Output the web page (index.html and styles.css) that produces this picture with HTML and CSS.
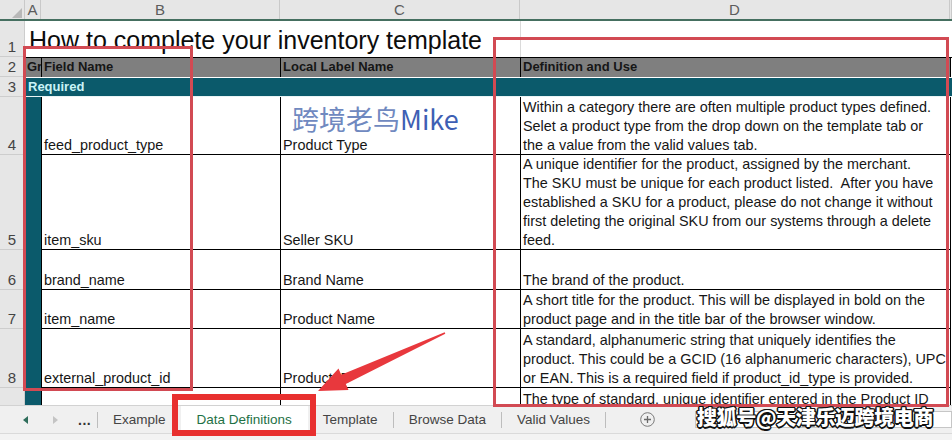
FILE: index.html
```html
<!DOCTYPE html>
<html lang="zh-CN">
<head>
  <meta charset="UTF-8">
  <meta name="viewport" content="width=device-width, initial-scale=1.0">
  <title>Data Definitions</title>
  <link rel="stylesheet" href="styles.css">
</head>
<body>
<div class="window">
  <div class="sheet">
    <div class="row colhead">
      <div class="corner"><svg width="25" height="19" viewBox="0 0 25 19"><polygon points="22,8 22,18 12,18" fill="#b8b8b8"/></svg></div>
      <div>A</div>
      <div>B</div>
      <div>C</div>
      <div>D</div>
      <div></div>
    </div>

    <div class="row r1">
      <div class="rh">1</div>
      <div class="title">How to complete your inventory template</div>
      <div class="grid-d"></div>
      <div></div>
    </div>

    <div class="row r2">
      <div class="rh">2</div>
      <div class="hd hd-a">Gr</div>
      <div class="hd">Field Name</div>
      <div class="hd">Local Label Name</div>
      <div class="hd">Definition and Use</div>
      <div class="hd-end"></div>
    </div>

    <div class="row r3">
      <div class="rh">3</div>
      <div class="req">Required</div>
    </div>

    <div class="row h4">
      <div class="rh">4</div>
      <div class="a"></div>
      <div class="c"><span>feed_product_type</span></div>
      <div class="c"><span>Product Type</span></div>
      <div class="c"><span>Within a category there are often multiple product types defined.<br>Selet a product type from the drop down on the template tab or<br>the a value from the valid values tab.</span></div>
      <div class="end"></div>
    </div>

    <div class="row h5">
      <div class="rh">5</div>
      <div class="a"></div>
      <div class="c"><span>item_sku</span></div>
      <div class="c"><span>Seller SKU</span></div>
      <div class="c"><span>A unique identifier for the product, assigned by the merchant.<br>The SKU must be unique for each product listed.&nbsp; After you have<br>established a SKU for a product, please do not change it without<br>first deleting the original SKU from our systems through a delete<br>feed.</span></div>
      <div class="end"></div>
    </div>

    <div class="row h6">
      <div class="rh">6</div>
      <div class="a"></div>
      <div class="c"><span>brand_name</span></div>
      <div class="c"><span>Brand Name</span></div>
      <div class="c"><span>The brand of the product.</span></div>
      <div class="end"></div>
    </div>

    <div class="row h7">
      <div class="rh">7</div>
      <div class="a"></div>
      <div class="c"><span>item_name</span></div>
      <div class="c"><span>Product Name</span></div>
      <div class="c"><span>A short title for the product. This will be displayed in bold on the<br>product page and in the title bar of the browser window.</span></div>
      <div class="end"></div>
    </div>

    <div class="row h8">
      <div class="rh">8</div>
      <div class="a"></div>
      <div class="c"><span>external_product_id</span></div>
      <div class="c"><span>Product ID</span></div>
      <div class="c"><span>A standard, alphanumeric string that uniquely identifies the<br>product. This could be a GCID (16 alphanumeric characters), UPC<br>or EAN. This is a required field if product_id_type is provided.</span></div>
      <div class="end"></div>
    </div>

    <div class="row h9">
      <div class="rh"></div>
      <div class="a"></div>
      <div class="c"></div>
      <div class="c"></div>
      <div class="c top"><span>The type of standard, unique identifier entered in the Product ID</span></div>
      <div class="end"></div>
    </div>
  </div>

  <div class="tabs">
    <div class="nav">
      <svg width="5" height="8" viewBox="0 0 5 8"><polygon points="5,0 5,8 0,4" fill="#2f6d5b"/></svg>
      <svg width="5" height="8" viewBox="0 0 5 8"><polygon points="0,0 0,8 5,4" fill="#c4c4c4"/></svg>
      <span class="dots">...</span>
    </div>
    <span class="divider"></span>
    <div class="tab">Example</div>
    <div class="tab active">Data Definitions</div>
    <div class="tab">Template</div>
    <span class="divider"></span>
    <div class="tab">Browse Data</div>
    <span class="divider"></span>
    <div class="tab">Valid Values</div>
    <span class="divider"></span>
    <div class="add">
      <svg width="15" height="15" viewBox="0 0 15 15"><circle cx="7.5" cy="7.5" r="6.8" fill="none" stroke="#7a7a7a" stroke-width="1"/><path d="M7.5 4v7M4 7.5h7" stroke="#6a6a6a" stroke-width="1.3"/></svg>
    </div>
    <div class="hscroll"></div>
  </div>
  <div class="status"></div>

  <!-- annotations drawn over the screenshot -->
  <div class="mark mark-left"></div>
  <div class="mark mark-right"></div>
  <div class="mark mark-tab"></div>
  <svg class="arrow" width="952" height="440" viewBox="0 0 952 440">
    <polygon points="318,391 338.5,368.5 341.2,374.8 444.7,332.3 445.3,333.7 345.8,384 348.5,390" fill="#e8383d"/>
  </svg>
  <div class="wm-blue">跨境老鸟<b>Mike</b></div>
  <div class="wm-sohu">搜狐号@天津乐迈跨境电商</div>
</div>
</body>
</html>
```

FILE: styles.css
```css
* {
  box-sizing: border-box;
}

html, body {
  margin: 0;
}

body {
  width: 952px;
  height: 440px;
  overflow: hidden;
  font-family: "Liberation Sans", "Noto Sans CJK SC", sans-serif;
  color: #1a1a1a;
  background: #fff;
}

.window {
  position: relative;
  width: 952px;
  height: 440px;
}

.sheet {
  height: 405px;
  overflow: hidden;
}

.row {
  display: grid;
  grid-template-columns: 25px 16px 239px 240px 430px 2px;
}

/* column letters */
.colhead {
  height: 21px;
  background: #e6e6e6;
  border-bottom: 2px solid #456f60;
}

.colhead div {
  border-right: 1px solid #c9c9c9;
  color: #5c5c5c;
  font-size: 15px;
  line-height: 19px;
  text-align: center;
}

.corner svg {
  display: block;
}

/* row numbers */
.rh {
  display: flex;
  flex-direction: column;
  justify-content: flex-end;
  align-items: center;
  background: #e6e6e6;
  border-bottom: 1px solid #cdcdcd;
  border-right: 1px solid #cdcdcd;
  color: #444;
  font-size: 15px;
  line-height: 19px;
}

.r1 {
  height: 36px;
}

.title {
  grid-column: 2 / 5;
  align-self: end;
  padding: 0 0 2px 4px;
  font-size: 25px;
  line-height: 30px;
  color: #0c0c0c;
  white-space: nowrap;
}

.grid-d {
  border-left: 1px solid #dadada;
}

.r2 {
  height: 20px;
}

.hd {
  background: #7f7f7f;
  border-top: 1px solid #000;
  border-left: 1px solid #000;
  padding-left: 2px;
  font-size: 13px;
  font-weight: bold;
  line-height: 18px;
  color: #161616;
  white-space: nowrap;
  overflow: hidden;
}

.hd-a {
  border-left: none;
}

.hd-end {
  border-top: 1px solid #000;
  border-left: 1px solid #000;
}

.r3 {
  height: 20px;
}

.req {
  grid-column: 2 / 7;
  background: #0b5a6b;
  border-top: 1px solid #fff;
  border-bottom: 1px solid #e9f4f5;
  padding-left: 3px;
  font-size: 13px;
  font-weight: bold;
  line-height: 17px;
  color: #c9f3f7;
}

.a {
  background: #0b5a6b;
}

.c {
  display: flex;
  flex-direction: column;
  justify-content: flex-end;
  border-left: 1px solid #000;
  border-bottom: 1px solid #000;
  padding: 0 0 0 2px;
  font-size: 14.4px;
  line-height: 19px;
  color: #161616;
  white-space: nowrap;
  overflow: hidden;
}

.c span {
  position: relative;
  top: 1px;
}

.c.top {
  justify-content: flex-start;
  padding-top: 1px;
}

.end {
  border-left: 1px solid #000;
}

.h4 { height: 58px; }
.h5 { height: 95px; }
.h6 { height: 40px; }
.h7 { height: 39px; }
.h8 { height: 59px; }
.h9 { height: 58px; }

/* sheet tabs */
.tabs {
  display: flex;
  height: 28px;
  background: #f0f0f0;
  border-top: 1px solid #d2d2d2;
  font-size: 13.5px;
  color: #444;
}

.nav {
  display: flex;
  align-items: center;
  width: 97px;
  padding-left: 23px;
  gap: 25px;
}

.nav svg + svg {
  margin-right: -5px;
}

.dots {
  font-size: 14px;
  font-weight: bold;
  color: #333;
  letter-spacing: 0.5px;
}

.divider {
  align-self: center;
  width: 1px;
  height: 16px;
  background: #bdbdbd;
}

.tab {
  display: flex;
  align-items: center;
  padding: 0 15px;
  white-space: nowrap;
}

.tab.active {
  padding: 0 16px;
  background: #fff;
  color: #1e7145;
}

.add {
  display: flex;
  align-items: center;
  padding-left: 34px;
}

.hscroll {
  align-self: center;
  margin-left: auto;
  width: 257px;
  height: 17px;
  background: #fff;
  border: 1px solid #c6c6c6;
}

.status {
  height: 7px;
  background: #f3f3f3;
  border-top: 1px solid #dadada;
}

/* annotations */
.mark {
  position: absolute;
  border: 3px solid #d24a53;
  pointer-events: none;
}

.mark-left {
  left: 23px;
  top: 46px;
  width: 170px;
  height: 345px;
}

.mark-right {
  left: 493px;
  top: 37px;
  width: 456px;
  height: 370px;
}

.mark-tab {
  left: 172px;
  top: 394px;
  width: 144px;
  height: 42px;
  border: 6px solid #e8302f;
}

.arrow {
  position: absolute;
  left: 0;
  top: 0;
  pointer-events: none;
}

.wm-blue {
  position: absolute;
  left: 292px;
  top: 103px;
  font-family: "Noto Sans CJK SC", sans-serif;
  font-size: 27px;
  line-height: 32px;
  color: #7089c0;
  white-space: nowrap;
}

.wm-blue b {
  font-weight: normal;
  color: #3e5fb4;
}

.wm-sohu {
  position: absolute;
  left: 697px;
  top: 403px;
  font-family: "Noto Sans CJK SC", sans-serif;
  font-size: 20px;
  font-weight: 900;
  line-height: 28px;
  letter-spacing: -0.4px;
  color: #fff;
  white-space: nowrap;
  text-shadow: -1.5px 0 #111, 1.5px 0 #111, 0 -1.5px #111, 0 1.5px #111,
    -1px -1px #111, 1px 1px #111, -1px 1px #111, 1px -1px #111;
}
```
